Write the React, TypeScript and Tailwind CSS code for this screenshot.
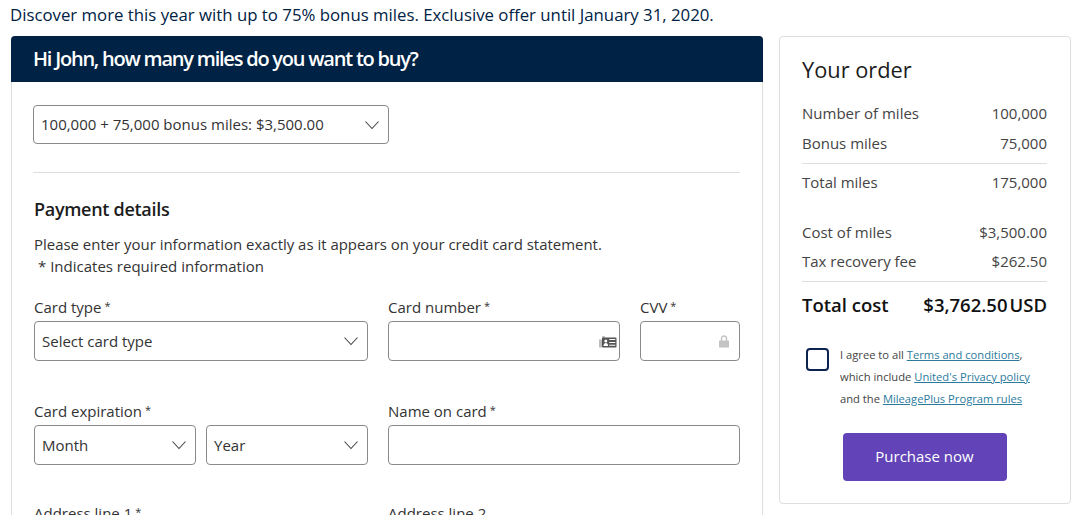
import React from 'react';

const Chevron = () => (
  <svg width="16" height="16" viewBox="0 0 16 16" fill="none" className="shrink-0 text-[#444]">
    <path d="M1.5 4.5 8 11.5l6.5-7" stroke="currentColor" strokeWidth="1.1" />
  </svg>
);

const CardIcon = () => (
  <svg width="18" height="12" viewBox="0 0 18 12" className="absolute right-[2px] top-[14px]">
    <path d="M0 3.5h3V1.2C3 .5 3.5 0 4.2 0h.6C5.500 0 6 .5 6 1.200V3H3v8.500H0z" fill="#bbb" />
    <rect x="3" y="1.500" width="14.500" height="10" rx="1" fill="#555" />
    <circle cx="6.800" cy="5" r="1.500" fill="#fff" />
    <path d="M4.500 10c0-2 1-3 2.300-3s2.300 1 2.300 3z" fill="#fff" />
    <path d="M10.300 3.500h6M10.300 6.500h6M10.300 9.300h6" stroke="#fff" strokeWidth="1.100" />
  </svg>
);

const LockIcon = () => (
  <svg width="10" height="13" viewBox="0 0 10 13" className="absolute right-[10px] top-[13px]">
    <path d="M2.500 6V3.500a2.500 2.500 0 0 1 5 0V6" fill="none" stroke="#c4c4c4" strokeWidth="1.500" />
    <rect x="0" y="5.500" width="10" height="7" rx=".5" fill="#c4c4c4" />
  </svg>
);

const Label = ({ text }: { text: string }) => (
  <div className="h-[24px] text-[15px] leading-[20px] text-[#333] whitespace-nowrap">
    {text}
    <span className="relative -top-[3px] ml-[3px] text-[11px]">*</span>
  </div>
);

const SelectBox = ({ text, className }: { text: string; className?: string }) => (
  <div className={`h-10 flex items-center justify-between pl-[7px] pr-2 bg-white border border-[#8a8a8a] rounded-[4px] text-[15px] text-[#333] ${className ?? ''}`}>
    <span className="whitespace-nowrap">{text}</span>
    <Chevron />
  </div>
);

const OrderRow = ({ label, value }: { label: string; value: string }) => (
  <div className="flex justify-between h-[29.500px] text-[15px] leading-[29px] text-[#444]">
    <span>{label}</span>
    <span>{value}</span>
  </div>
);

export default function App() {
  return (
    <div className="w-[1080px] h-[515px] overflow-hidden bg-white font-['Open_Sans',sans-serif]">
      <p className="h-[36px] pl-[10px] pt-[3px] text-[16.800px] leading-[24px] font-medium text-[#002244] whitespace-nowrap">
        Discover more this year with up to 75% bonus miles. Exclusive offer until January 31, 2020.
      </p>

      <div className="flex items-start gap-4 pl-[11px]">
        {/* left form card */}
        <div className="w-[752px] h-[600px] border border-[#dedede] rounded-t-[4px] shrink-0">
          <div className="-mx-px -mt-px h-[46px] bg-[#002244] rounded-t-[4px] pl-[22px] flex items-center">
            <h1 className="text-[20px] font-semibold tracking-[-1.22px] text-white whitespace-nowrap">
              Hi John, how many miles do you want to buy?
            </h1>
          </div>

          <div className="pl-[21px] pr-[22px] pt-[23px]">
            <SelectBox text="100,000 + 75,000 bonus miles: $3,500.00" className="w-[356px] h-[39px]" />
            <div className="mt-[28px] border-t border-[#dedede]" />

            <h2 className="mt-[23px] pl-px text-[18px] leading-[26px] font-semibold tracking-[-0.3px] text-[#1c1c1c]">Payment details</h2>
            <p className="mt-[11px] pl-px text-[14.950px] leading-[22px] text-[#333] whitespace-nowrap">
              Please enter your information exactly as it appears on your credit card statement.
            </p>
            <p className="pl-[5px] text-[15px] leading-[22px] text-[#333] whitespace-nowrap">* Indicates required information</p>

            <div className="mt-[20px] pl-px grid grid-cols-[334px_232px_100px] gap-x-5 gap-y-[40px]">
              <div>
                <Label text="Card type" />
                <SelectBox text="Select card type" />
              </div>
              <div>
                <Label text="Card number" />
                <div className="relative h-10 border border-[#8a8a8a] rounded-[4px]">
                  <CardIcon />
                </div>
              </div>
              <div>
                <Label text="CVV" />
                <div className="relative h-10 border border-[#8a8a8a] rounded-[4px]">
                  <LockIcon />
                </div>
              </div>

              <div>
                <Label text="Card expiration" />
                <div className="flex gap-[10px]">
                  <SelectBox text="Month" className="flex-1" />
                  <SelectBox text="Year" className="flex-1" />
                </div>
              </div>
              <div className="col-span-2">
                <Label text="Name on card" />
                <div className="h-10 border border-[#8a8a8a] rounded-[4px]" />
              </div>

              <div className="-mt-[2px]">
                <Label text="Address line 1" />
              </div>
              <div className="col-span-2 -mt-[2px]">
                <div className="h-[24px] text-[15px] leading-[20px] text-[#333]">Address line 2</div>
              </div>
            </div>
          </div>
        </div>

        {/* order summary */}
        <div className="w-[292px] h-[468px] border border-[#dedede] rounded-[4px] shrink-0 pl-[22px] pr-[23px] pt-[17px]">
          <h2 className="text-[21.800px] leading-[32px] font-medium text-[#1c1c1c]">Your order</h2>
          <div className="mt-[13px]">
            <OrderRow label="Number of miles" value="100,000" />
            <OrderRow label="Bonus miles" value="75,000" />
          </div>
          <div className="mt-[5px] pt-[4px] border-t border-[#dedede]">
            <OrderRow label="Total miles" value="175,000" />
          </div>
          <div className="mt-[20px]">
            <OrderRow label="Cost of miles" value="$3,500.00" />
            <OrderRow label="Tax recovery fee" value="$262.50" />
          </div>
          <div className="mt-[4px] pt-[7px] border-t border-[#dedede] flex justify-between text-[18.500px] leading-[32px] font-semibold text-[#111]">
            <span>Total cost</span>
            <span>$3,762.50<span className="ml-[2px]">USD</span></span>
          </div>

          <div className="mt-[23px] flex pl-[4px]">
            <div className="w-[23px] h-[23px] mt-[4px] shrink-0 border-2 border-[#0c2350] rounded-[4px]" />
            <p className="ml-[11px] text-[11.200px] leading-[22px] text-[#444] whitespace-nowrap">
              I agree to all <a className="text-[#2b7a9c] underline">Terms and conditions</a>,<br />
              which include <a className="text-[#2b7a9c] underline">United's Privacy policy</a><br />
              and the <a className="text-[#2b7a9c] underline">MileagePlus Program rules</a>
            </p>
          </div>

          <div className="mt-[23px] flex justify-center">
            <button className="w-[164px] h-[48px] bg-[#6244b8] rounded-[4px] text-[15px] text-white">Purchase now</button>
          </div>
        </div>
      </div>
    </div>
  );
}
